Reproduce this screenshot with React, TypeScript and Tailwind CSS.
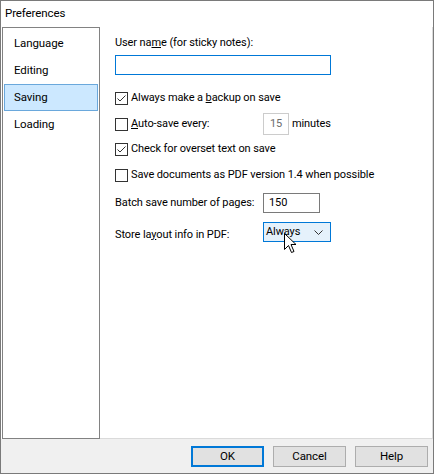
import React from "react";

const font = { fontFamily: 'Roboto, "Liberation Sans", Arial, sans-serif' };

function Box({ checked }: { checked?: boolean }) {
  return (
    <span className="w-[13px] h-[13px] border border-[#333333] bg-white flex items-center justify-center shrink-0">
      {checked && (
        <svg width="11" height="11" viewBox="0 0 11 11">
          <path d="M1.5 5.5 L4 8 L9.5 2.5" fill="none" stroke="#333333" strokeWidth="1" />
        </svg>
      )}
    </span>
  );
}

function Btn({ label, primary }: { label: string; primary?: boolean }) {
  return (
    <div
      className={
        "w-[73px] h-[21px] flex items-center justify-center bg-[#e1e1e1] text-black " +
        (primary ? "border-2 border-[#0078d7]" : "border border-[#adadad]")
      }
    >
      {label}
    </div>
  );
}

export default function App() {
  const items = ["Language", "Editing", "Saving", "Loading"];
  return (
    <div
      className="w-[434px] h-[474px] flex flex-col bg-white border border-[#7a7a7a] text-[11px] tracking-[-0.1px] text-black whitespace-nowrap"
      style={font}
    >
      <div className="h-[26px] flex items-center pl-[4px] text-[11.5px]">Preferences</div>
      <div className="flex-1 flex min-h-0">
        <div className="w-[98px] ml-[1px] border border-[#828282] bg-white pt-[2px] px-[1px] flex flex-col text-[11.5px]">
          {items.map((it) => (
            <div
              key={it}
              className={
                "h-[27px] flex items-center pl-[9px] border " +
                (it === "Saving" ? "bg-[#cce8ff] border-[#6aa8dc]" : "border-transparent")
              }
            >
              {it}
            </div>
          ))}
        </div>
        <div className="flex-1 border-r border-b border-[#dadada] pl-[15px] pt-[8px] flex flex-col">
          <div className="h-[16px] flex items-center">
            <span>
              User na<u>m</u>e (for sticky notes):
            </span>
          </div>
          <div className="mt-[4px] w-[216px] h-[20px] border border-[#0078d7] bg-white" />
          <div className="mt-[13px] h-[20px] flex items-center gap-[3px]">
            <Box checked />
            <span>
              Always make a <u>b</u>ackup on save
            </span>
          </div>
          <div className="mt-[5px] h-[22px] flex items-center">
            <Box />
            <span className="ml-[3px] w-[132px]">
              <u>A</u>uto-save every:
            </span>
            <div className="w-[26px] h-[22px] border border-[#cccccc] bg-white flex items-center justify-center text-[#6d6d6d]">
              15
            </div>
            <span className="ml-[3px]">minutes</span>
          </div>
          <div className="mt-[4px] h-[20px] flex items-center gap-[3px]">
            <Box checked />
            <span>Check for overset text on save</span>
          </div>
          <div className="mt-[6px] h-[20px] flex items-center gap-[3px]">
            <Box />
            <span>Save documents as PDF version 1.4 when possible</span>
          </div>
          <div className="mt-[8px] h-[20px] flex items-center">
            <span className="w-[148px]">Batch save number of pages:</span>
            <div className="w-[57px] h-[20px] border border-[#7a7a7a] bg-white flex items-center pl-[5px]">150</div>
          </div>
          <div className="mt-[9px] h-[20px] flex items-center">
            <span className="w-[148px] pt-[6px]">
              Store la<u>y</u>out info in PDF:
            </span>
            <div className="relative w-[68px] h-[20px] border border-[#0078d7] bg-[#e5f1fb] flex items-center pl-[2px] pr-[7px] justify-between">
              <span>Always</span>
              <svg width="9" height="5" viewBox="0 0 9 5">
                <path d="M0.5 0.5 L4.5 4.5 L8.5 0.5" fill="none" stroke="#333333" strokeWidth="1" />
              </svg>
              <svg
                className="absolute left-[20px] top-[10px]"
                width="13"
                height="21"
                viewBox="0 0 13 21"
              >
                <path
                  d="M0.5 0.5 L0.5 16.5 L4.5 12.5 L7.5 19.5 L10 18.5 L7 11.5 L12 11.5 Z"
                  fill="white"
                  stroke="black"
                  strokeWidth="1"
                  strokeLinejoin="miter"
                />
              </svg>
            </div>
          </div>
        </div>
      </div>
      <div className="h-[34px] bg-[#f0f0f0] flex justify-end items-start pt-[7px] pr-[5px] gap-[9px] text-[11.5px]">
        <Btn label="OK" primary />
        <Btn label="Cancel" />
        <Btn label="Help" />
      </div>
    </div>
  );
}
